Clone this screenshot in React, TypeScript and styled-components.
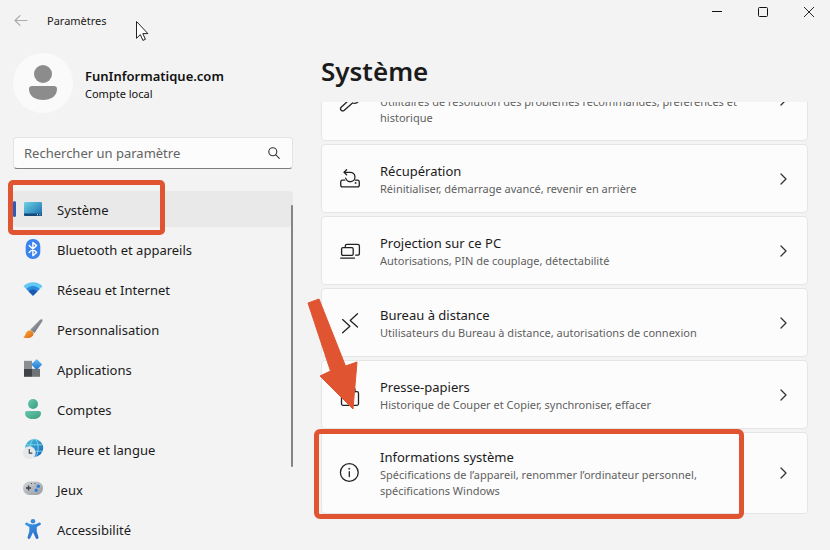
import React from "react";
import styled, { createGlobalStyle } from "styled-components";

const ACCENT = "#e05432";

const GlobalStyle = createGlobalStyle`
  * { box-sizing: border-box; }
  body {
    margin: 0;
    background: #f3f3f3;
    color: #1b1b1b;
    font-family: "Noto Sans", "Open Sans", sans-serif;
    overflow: hidden;
  }
  button, input { font: inherit; color: inherit; }
`;

const Window = styled.div`
  height: 100vh;
  display: flex;
  flex-direction: column;
  overflow: hidden;
`;

const TitleBar = styled.header`
  display: flex;
  align-items: center;
  height: 41px;
  flex: none;
  padding-left: 13px;
  font-size: 11px;
`;

const BackButton = styled.button`
  display: flex;
  width: 34px;
  padding: 0 0 0 1px;
  border: 0;
  background: none;
`;

const WindowControls = styled.div`
  display: flex;
  align-self: flex-start;
  margin-left: auto;
  margin-right: -2px;
`;

const ControlButton = styled.button`
  display: grid;
  place-items: center;
  width: 46px;
  height: 24px;
  padding: 0;
  border: 0;
  background: none;
`;

const Body = styled.div`
  flex: 1;
  min-height: 0;
  display: flex;
  gap: 28px;
  padding: 0 22px 0 13px;
`;

const Sidebar = styled.aside`
  width: 280px;
  flex: none;
  display: flex;
  flex-direction: column;
`;

const Account = styled.button`
  display: flex;
  align-items: center;
  gap: 12px;
  margin-top: 12px;
  padding: 0;
  border: 0;
  background: none;
  text-align: left;
`;

const AccountText = styled.span`
  display: flex;
  flex-direction: column;
  padding-top: 2px;
  color: #111;
`;

const AccountName = styled.strong`
  font-size: 13px;
  line-height: 20px;
  font-weight: 600;
`;

const AccountKind = styled.span`
  font-size: 11px;
  line-height: 16px;
`;

const SearchBox = styled.label`
  display: flex;
  align-items: center;
  height: 32px;
  margin: 24px 0 22px;
  padding: 0 12px 0 10px;
  border: 1px solid #e3e3e3;
  border-bottom-color: #7d7d7d;
  border-radius: 4px;
  background: #fcfcfc;
`;

const SearchInput = styled.input`
  flex: 1;
  min-width: 0;
  padding: 0;
  border: 0;
  outline: 0;
  background: none;
  font-size: 13px;
  &::placeholder { color: #636363; opacity: 1; }
`;

const Nav = styled.nav`
  position: relative;
  flex: 1;
  min-height: 0;
`;

const NavList = styled.ul`
  display: flex;
  flex-direction: column;
  gap: 4px;
  margin: 0;
  padding: 0;
  list-style: none;
`;

const NavEntry = styled.li`
  position: relative;
`;

const NavLink = styled.a<{ $active?: boolean }>`
  display: flex;
  align-items: center;
  gap: 14px;
  height: 36px;
  padding: 2px 0 0 10px;
  border-radius: 4px;
  background: ${(p) => (p.$active ? "#e9e9e9" : "transparent")};
  color: inherit;
  font-size: 13px;
  text-decoration: none;
`;

const ActiveMark = styled.span`
  position: absolute;
  left: 0;
  top: 10px;
  width: 3px;
  height: 16px;
  border-radius: 2px;
  background: #2c5cb8;
`;

const ScrollThumb = styled.span`
  position: absolute;
  right: 0;
  top: 14px;
  width: 2px;
  height: 73%;
  border-radius: 1px;
  background: #858585;
`;

const NavHighlight = styled.span`
  position: absolute;
  left: -5px;
  top: -11px;
  width: 157px;
  height: 55px;
  border: 5px solid ${ACCENT};
  border-radius: 5px;
  pointer-events: none;
`;

const Main = styled.main`
  flex: 1;
  min-width: 0;
  display: flex;
  flex-direction: column;
`;

const Heading = styled.h1`
  margin: 0;
  padding: 12px 0 13px;
  font-size: 26px;
  line-height: 36px;
  font-weight: 600;
`;

const ScrollArea = styled.div`
  flex: 1;
  min-height: 0;
  margin-left: -16px;
  padding-left: 16px;
  overflow: hidden;
`;

const CardList = styled.div`
  display: flex;
  flex-direction: column;
  gap: 3px;
  margin-top: -43px;
`;

const CardSlot = styled.div`
  position: relative;
`;

const Card = styled.button`
  display: flex;
  align-items: center;
  gap: 20px;
  width: 100%;
  min-height: 69px;
  padding: 14px 18px;
  border: 1px solid #e5e5e5;
  border-radius: 4px;
  background: #fcfcfc;
  text-align: left;
`;

const CardText = styled.span`
  flex: 1;
  min-width: 0;
  display: flex;
  flex-direction: column;
  padding-right: 4px;
`;

const CardTitle = styled.span`
  font-size: 13px;
  line-height: 20px;
`;

const CardDescription = styled.span`
  color: #5f5f5f;
  font-size: 11px;
  line-height: 16px;
`;

const CardHighlight = styled.span`
  position: absolute;
  inset: -3px 64px -5px -7px;
  border: 5px solid ${ACCENT};
  border-radius: 6px;
  pointer-events: none;
`;

const Arrow = styled.svg`
  position: absolute;
  left: -14px;
  top: -134px;
  pointer-events: none;
`;

const Pointer = styled.svg`
  position: absolute;
  left: 135px;
  top: 20px;
  pointer-events: none;
`;

const Glyph = styled.svg`
  flex: none;
  display: block;
  overflow: visible;
`;

const LineIcon = ({ children }: { children: React.ReactNode }) => (
  <Glyph
    width="20"
    height="20"
    viewBox="0 0 20 20"
    fill="none"
    stroke="#222"
    strokeWidth="1.3"
    strokeLinecap="round"
    strokeLinejoin="round"
    aria-hidden
  >
    {children}
  </Glyph>
);

const ColorIcon = ({ children }: { children: React.ReactNode }) => (
  <Glyph width="20" height="20" viewBox="0 0 20 20" aria-hidden>
    {children}
  </Glyph>
);

const Gradient = ({ id, from, to }: { id: string; from: string; to: string }) => (
  <linearGradient id={id} x1="0" y1="0" x2="1" y2="1">
    <stop offset="0" stopColor={from} />
    <stop offset="1" stopColor={to} />
  </linearGradient>
);

const navItems = [
  {
    label: "Système",
    icon: (
      <ColorIcon>
        <Gradient id="screen" from="#6bd3e6" to="#1b68ac" />
        <rect x="1" y="2" width="18" height="14" rx="1.2" fill="url(#screen)" />
        <path d="M1 13.500h18v1.300a1.200 1.200 0 0 1-1.200 1.200H2.200A1.200 1.200 0 0 1 1 14.800z" fill="#154a78" />
        <path d="M14 14.700h1M16.500 14.700h1" stroke="#dff" strokeWidth="1" />
      </ColorIcon>
    ),
  },
  {
    label: "Bluetooth et appareils",
    icon: (
      <ColorIcon>
        <rect x="2.700" y="-1" width="14.600" height="20" rx="7" fill="#3b82ee" />
        <path d="M6.200 5.600l7.400 6.900-3.700 3.200V2.500l3.700 3.100-7.400 6.900" fill="none" stroke="#fff" strokeWidth="1.400" strokeLinejoin="round" strokeLinecap="round" />
      </ColorIcon>
    ),
  },
  {
    label: "Réseau et Internet",
    icon: (
      <ColorIcon>
        <path d="M.5 6.200C5.500.8 14.500.8 19.500 6.200L10 15.800z" fill="#62c8f1" />
        <path d="M3.300 9c3.800-4 9.600-4 13.400 0L10 15.800z" fill="#2b8ae0" />
        <path d="M5.700 11.400c2.600-2.600 6-2.600 8.600 0L10 15.800z" fill="#1f59ac" />
      </ColorIcon>
    ),
  },
  {
    label: "Personnalisation",
    icon: (
      <ColorIcon>
        <Gradient id="handle" from="#b5b9be" to="#555b63" />
        <Gradient id="bristle" from="#f9b03e" to="#dd6415" />
        <path d="M18.800-.8c1 .3 1 1.100.5 2L11.500 13 7.200 9.700 17-.2c.6-.6 1.200-.8 1.800-.6z" fill="url(#handle)" />
        <path d="M6.800 10.200c2.200.2 3.700 1.700 3.800 3.700-.7 3.400-5 5.200-10.400 3.600C2.800 16.400 1.900 10.800 6.800 10.200z" fill="url(#bristle)" />
      </ColorIcon>
    ),
  },
  {
    label: "Applications",
    icon: (
      <ColorIcon>
        <Gradient id="diamond" from="#62bcf5" to="#1c72cb" />
        <path d="M1 .8h8v8H1z" fill="#8b8e91" />
        <path d="M1 8.800h8v8H1z" fill="#3f4246" />
        <path d="M9 8.800h8v8H9z" fill="#707376" />
        <rect x="9.800" y=".6" width="7.800" height="7.800" rx="1" transform="rotate(45 13.700 4.500)" fill="url(#diamond)" />
      </ColorIcon>
    ),
  },
  {
    label: "Comptes",
    icon: (
      <ColorIcon>
        <Gradient id="person" from="#68c9ae" to="#399a7c" />
        <circle cx="10" cy="4" r="5" fill="url(#person)" />
        <path d="M4 11h12a2 2 0 0 1 2 2c0 4-3.500 6-8 6s-8-2-8-6a2 2 0 0 1 2-2z" fill="url(#person)" />
      </ColorIcon>
    ),
  },
  {
    label: "Heure et langue",
    icon: (
      <ColorIcon>
        <Gradient id="globe" from="#48c3dc" to="#1763b8" />
        <circle cx="11.200" cy="8" r="9" fill="url(#globe)" />
        <g fill="none" stroke="#8ee0f2" strokeWidth=".8">
          <ellipse cx="11.200" cy="8" rx="4" ry="9" />
          <path d="M3.200 4.800h16M2.500 11.200h17.400" />
        </g>
        <circle cx="6.300" cy="12.700" r="6.400" fill="#e5e8eb" />
        <path d="M6.300 9v4.200h3" fill="none" stroke="#42474d" strokeWidth="1.200" />
      </ColorIcon>
    ),
  },
  {
    label: "Jeux",
    icon: (
      <ColorIcon>
        <Gradient id="pad" from="#d2d5d9" to="#9699a1" />
        <rect x="0" y="1.500" width="20" height="13.500" rx="6.500" fill="url(#pad)" />
        <path d="M5.500 5.500v5M3 8h5" stroke="#3c4047" strokeWidth="1.300" />
        <path d="M8 3.500h1M11.500 3.500h1" stroke="#4a4e55" strokeWidth="1" />
        <circle cx="15.300" cy="6.300" r="1.700" fill="#2d7dd2" />
        <circle cx="13.200" cy="10.200" r="1.600" fill="#2d7dd2" />
      </ColorIcon>
    ),
  },
  {
    label: "Accessibilité",
    icon: (
      <ColorIcon>
        <Gradient id="access" from="#3c9bea" to="#2467c2" />
        <circle cx="10" cy="1.300" r="2.300" fill="#348bdc" />
        <path d="M2.300 3.200c.4-.8 1.200-.9 1.900-.5C7.800 5 12.200 5 15.800 2.700c.7-.4 1.500-.3 1.900.5.400.8.100 1.500-.6 1.900l-3.400 2v4.200l1.700 5.800c.2.900-.1 1.600-.9 1.900-.8.200-1.500-.2-1.800-1L10 12.300 7.300 18c-.3.800-1 1.200-1.800 1-.8-.3-1.100-1-.9-1.900l1.700-5.800V7.100l-3.400-2c-.7-.4-1-1.100-.6-1.900z" fill="url(#access)" />
      </ColorIcon>
    ),
  },
];

const cards = [
  {
    title: "Résolution des problèmes",
    description: "Utilitaires de résolution des problèmes recommandés, préférences et historique",
    icon: (
      <LineIcon>
        <path d="M12.500 13c2 .7 4.500.2 5.900-1.600 1.300-1.600 1.500-3.700.8-5.500L16 9l-3-1-1-3 3.200-3.200c-4-1.300-8 2-7.100 6.700L7.900 11 1.200 17.200c-2 2.200 1 4.900 3.100 3z" />
      </LineIcon>
    ),
  },
  {
    title: "Récupération",
    description: "Réinitialiser, démarrage avancé, revenir en arrière",
    icon: (
      <LineIcon>
        <path d="M4.700 11.200H2.600A1.900 1.900 0 0 0 .7 13v3a1.900 1.900 0 0 0 1.900 1.900h14.800a1.900 1.900 0 0 0 1.900-1.900v-3a1.900 1.900 0 0 0-1.900-1.800h-2.100" />
        <path d="M4.300 3.300h5.900a4.700 4.700 0 1 1-4.500 5.900" />
        <path d="M6.600.8L4.100 3.300l2.500 2.500" />
        <circle cx="15.600" cy="14" r=".3" />
      </LineIcon>
    ),
  },
  {
    title: "Projection sur ce PC",
    description: "Autorisations, PIN de couplage, détectabilité",
    icon: (
      <LineIcon>
        <path d="M5.300 5.500V5a1.700 1.700 0 0 1 1.700-1.700h10.700A1.700 1.700 0 0 1 19.400 5v7.500a1.700 1.700 0 0 1-1.700 1.700h-2" />
        <rect x="1.600" y="6.700" width="11.600" height="7.600" rx="1.300" />
        <path d="M.7 17.100h13.800" />
      </LineIcon>
    ),
  },
  {
    title: "Bureau à distance",
    description: "Utilisateurs du Bureau à distance, autorisations de connexion",
    icon: (
      <LineIcon>
        <path d="M2.600 6.600l7.300 6.600-7.300 6.600M17.500.8l-7.300 6.600 7.300 6.600" />
      </LineIcon>
    ),
  },
  {
    title: "Presse-papiers",
    description: "Historique de Couper et Copier, synchroniser, effacer",
    icon: (
      <LineIcon>
        <rect x="1.500" y="6.700" width="17" height="13.600" rx="1.500" />
        <path d="M5 6.700V4.500A1.500 1.500 0 0 1 6.500 3h7A1.500 1.500 0 0 1 15 4.500v2.200" />
      </LineIcon>
    ),
  },
  {
    title: "Informations système",
    description: "Spécifications de l’appareil, renommer l’ordinateur personnel, spécifications Windows",
    highlighted: true,
    icon: (
      <LineIcon>
        <circle cx="9.300" cy="9.500" r="8.900" />
        <path d="M9.300 8.700v4.800" />
        <circle cx="9.300" cy="5.800" r=".3" />
      </LineIcon>
    ),
  },
];

export default function App() {
  return (
    <>
      <GlobalStyle />
      <Window>
        <TitleBar>
          <BackButton aria-label="Retour">
            <Glyph width="14" height="12" viewBox="0 0 14 12" fill="none" stroke="#aaa" strokeWidth="1.1" strokeLinecap="round" strokeLinejoin="round">
              <path d="M13 5.500H1M6 .7L1 5.500l5 4.800" />
            </Glyph>
          </BackButton>
          <span>Paramètres</span>
          <WindowControls>
            <ControlButton aria-label="Réduire">
              <Glyph width="12" height="12" viewBox="0 0 12 12" stroke="#111" fill="none">
                <path d="M1 5.500h10" />
              </Glyph>
            </ControlButton>
            <ControlButton aria-label="Agrandir">
              <Glyph width="12" height="12" viewBox="0 0 12 12" stroke="#111" fill="none">
                <rect x="1.500" y="1.500" width="9" height="9" rx="1" />
              </Glyph>
            </ControlButton>
            <ControlButton aria-label="Fermer">
              <Glyph width="12" height="12" viewBox="0 0 12 12" stroke="#111" fill="none" strokeWidth=".9">
                <path d="M1 1l10 10M11 1L1 11" />
              </Glyph>
            </ControlButton>
          </WindowControls>
        </TitleBar>

        <Body>
          <Sidebar>
            <Account>
              <Glyph width="60" height="60" viewBox="0 0 60 60" aria-hidden>
                <circle cx="30" cy="30" r="30" fill="#fafafa" />
                <circle cx="30" cy="21" r="9" fill="#8c8c8c" />
                <path d="M19 33h22a3 3 0 0 1 3 3c0 7-6 11-14 11s-14-4-14-11a3 3 0 0 1 3-3z" fill="#8c8c8c" />
              </Glyph>
              <AccountText>
                <AccountName>FunInformatique.com</AccountName>
                <AccountKind>Compte local</AccountKind>
              </AccountText>
            </Account>

            <SearchBox>
              <SearchInput type="text" placeholder="Rechercher un paramètre" aria-label="Rechercher un paramètre" />
              <Glyph width="12" height="12" viewBox="0 0 12 12" fill="none" stroke="#333" strokeWidth="1.100" strokeLinecap="round" aria-hidden>
                <circle cx="4.800" cy="4.800" r="4" />
                <path d="M7.800 7.800l3.500 3.500" />
              </Glyph>
            </SearchBox>

            <Nav>
              <NavList>
                {navItems.map((item, index) => (
                  <NavEntry key={item.label}>
                    <NavLink href="#" $active={index === 0}>
                      {item.icon}
                      {item.label}
                    </NavLink>
                    {index === 0 && (
                      <>
                        <ActiveMark />
                        <NavHighlight />
                      </>
                    )}
                  </NavEntry>
                ))}
              </NavList>
              <ScrollThumb />
            </Nav>
          </Sidebar>

          <Main>
            <Heading>Système</Heading>
            <ScrollArea>
              <CardList>
                {cards.map((card) => (
                  <CardSlot key={card.title}>
                    <Card>
                      {card.icon}
                      <CardText>
                        <CardTitle>{card.title}</CardTitle>
                        <CardDescription>{card.description}</CardDescription>
                      </CardText>
                      <Glyph width="12" height="12" viewBox="0 0 12 12" fill="none" stroke="#333" strokeWidth="1.300" strokeLinecap="round" strokeLinejoin="round" aria-hidden>
                        <path d="M4 1l5 5-5 5" />
                      </Glyph>
                    </Card>
                    {card.highlighted && (
                      <>
                        <CardHighlight />
                        <Arrow width="52" height="114" viewBox="0 0 52 114" aria-hidden>
                          <path d="M1 5L12 1l26.500 67L50 64l-4 47-33-33 10.500-5z" fill={ACCENT} stroke={ACCENT} strokeLinejoin="round" />
                        </Arrow>
                      </>
                    )}
                  </CardSlot>
                ))}
              </CardList>
            </ScrollArea>
          </Main>
        </Body>
        <Pointer width="14" height="22" viewBox="0 0 14 22" aria-hidden>
          <path d="M1.500 1.500v16.800l3.800-3.700 2.600 5.800 2.500-1.100-2.600-5.700h5.100z" fill="#fff" stroke="#222" strokeWidth="1" strokeLinejoin="round" />
        </Pointer>
      </Window>
    </>
  );
}
